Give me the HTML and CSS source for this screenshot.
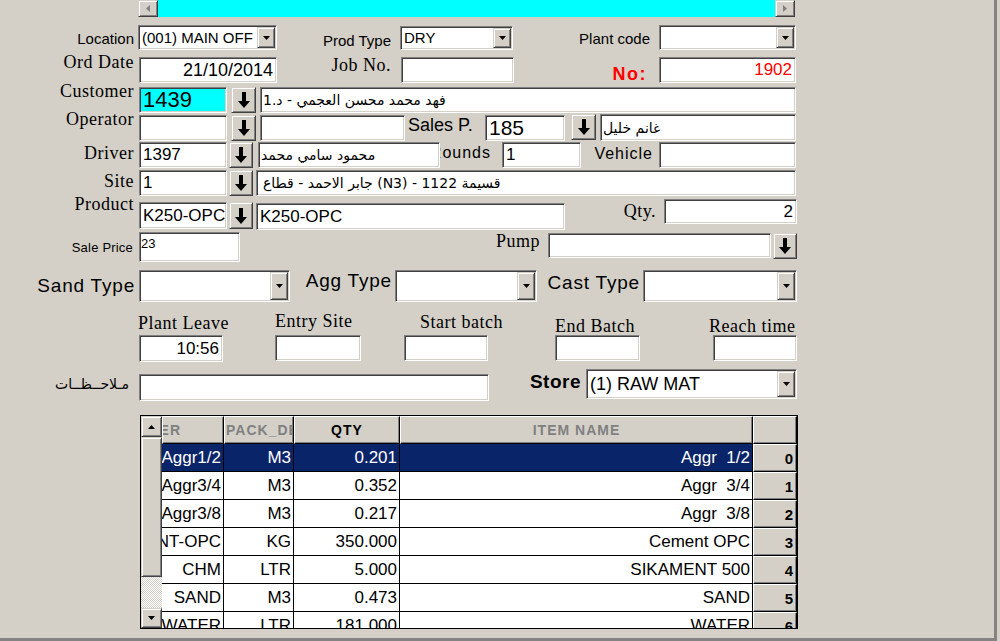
FILE: index.html
```html
<!DOCTYPE html>
<html>
<head>
<meta charset="utf-8">
<title>Delivery</title>
<link rel="stylesheet" href="styles.css">
</head>
<body>
<div class="window">
  <div class="hscroll">
    <div class="btn sbtn"><svg width="4" height="7" viewBox="0 0 4 7"><path d="M4 0v7L0 3.5z" fill="#808080"/></svg></div>
    <div class="track"></div>
    <div class="btn sbtn"><svg width="4" height="7" viewBox="0 0 4 7"><path d="M0 0v7l4-3.5z" fill="#808080"/></svg></div>
  </div>

  <div class="row r1">
    <div class="lbl s15 l-loc">Location</div>
    <div class="sunk combo c-loc"><span class="val v15">(001) MAIN OFF</span><span class="btn dd"><svg width="7" height="4" viewBox="0 0 7 4"><path d="M0 0h7L3.5 4z"/></svg></span></div>
    <div class="lbl s15 l-prod">Prod Type</div>
    <div class="sunk combo c-prod"><span class="val v15">DRY</span><span class="btn dd"><svg width="7" height="4" viewBox="0 0 7 4"><path d="M0 0h7L3.5 4z"/></svg></span></div>
    <div class="lbl s15 l-plant">Plant code</div>
    <div class="sunk combo c-plant"><span class="val"></span><span class="btn dd"><svg width="7" height="4" viewBox="0 0 7 4"><path d="M0 0h7L3.5 4z"/></svg></span></div>
  </div>

  <div class="row r2">
    <div class="lbl serif l-ord">Ord Date</div>
    <div class="sunk inp i-ord"><span class="val v18 right">21/10/2014</span></div>
    <div class="lbl serif l-job">Job No.</div>
    <div class="sunk inp i-job"></div>
    <div class="lbl l-no">No:</div>
    <div class="sunk inp i-no"><span class="val v17 right red">1902</span></div>
  </div>

  <div class="row r3">
    <div class="lbl serif l-cust">Customer</div>
    <div class="sunk inp i-cust"><span class="val v22">1439</span></div>
    <div class="btn arrow b-cust"><svg width="12" height="16" viewBox="0 0 12 16"><path d="M4 0h4v9h4l-6 7-6-7h4z"/></svg></div>
    <div class="sunk inp i-custn"><span class="val ar">فهد محمد محسن العجمي - د.1</span></div>
  </div>

  <div class="row r4">
    <div class="lbl serif l-op">Operator</div>
    <div class="sunk inp i-op"></div>
    <div class="btn arrow b-op"><svg width="12" height="16" viewBox="0 0 12 16"><path d="M4 0h4v9h4l-6 7-6-7h4z"/></svg></div>
    <div class="sunk inp i-opn"></div>
    <div class="lbl l-sales">Sales P.</div>
    <div class="sunk inp i-sales"><span class="val v21">185</span></div>
    <div class="btn arrow b-sales"><svg width="12" height="16" viewBox="0 0 12 16"><path d="M4 0h4v9h4l-6 7-6-7h4z"/></svg></div>
    <div class="sunk inp i-salesn"><span class="val ar">غانم خليل</span></div>
  </div>

  <div class="row r5">
    <div class="lbl serif l-drv">Driver</div>
    <div class="sunk inp i-drv"><span class="val v17">1397</span></div>
    <div class="btn arrow b-drv"><svg width="12" height="16" viewBox="0 0 12 16"><path d="M4 0h4v9h4l-6 7-6-7h4z"/></svg></div>
    <div class="sunk inp i-drvn"><span class="val ar">محمود سامي محمد</span></div>
    <div class="lbl s16 l-rounds"><span>Rounds</span></div>
    <div class="sunk inp i-rounds"><span class="val v17">1</span></div>
    <div class="lbl s16 l-veh">Vehicle</div>
    <div class="sunk inp i-veh"></div>
  </div>

  <div class="row r6">
    <div class="lbl serif l-site">Site</div>
    <div class="sunk inp i-site"><span class="val v17">1</span></div>
    <div class="btn arrow b-site"><svg width="12" height="16" viewBox="0 0 12 16"><path d="M4 0h4v9h4l-6 7-6-7h4z"/></svg></div>
    <div class="sunk inp i-siten"><span class="val ar site">قسيمة 1122 - (N3) جابر الاحمد - قطاع</span></div>
  </div>

  <div class="row r7">
    <div class="lbl serif l-prodct">Product</div>
    <div class="sunk inp i-prodct"><span class="val v17">K250-OPC</span></div>
    <div class="btn arrow b-prodct"><svg width="12" height="16" viewBox="0 0 12 16"><path d="M4 0h4v9h4l-6 7-6-7h4z"/></svg></div>
    <div class="sunk inp i-prodn"><span class="val v17">K250-OPC</span></div>
    <div class="lbl serif l-qty">Qty.</div>
    <div class="sunk inp i-qty"><span class="val v17 right">2</span></div>
  </div>

  <div class="row r8">
    <div class="lbl l-price">Sale Price</div>
    <div class="sunk inp i-price"><span class="val v13">23</span></div>
    <div class="lbl serif l-pump">Pump</div>
    <div class="sunk inp i-pump"></div>
    <div class="btn arrow b-pump"><svg width="12" height="16" viewBox="0 0 12 16"><path d="M4 0h4v9h4l-6 7-6-7h4z"/></svg></div>
  </div>

  <div class="row r9">
    <div class="lbl s19 l-sand">Sand Type</div>
    <div class="sunk combo c-sand"><span class="val"></span><span class="btn dd"><svg width="7" height="4" viewBox="0 0 7 4"><path d="M0 0h7L3.5 4z"/></svg></span></div>
    <div class="lbl s19 l-agg">Agg Type</div>
    <div class="sunk combo c-agg"><span class="val"></span><span class="btn dd"><svg width="7" height="4" viewBox="0 0 7 4"><path d="M0 0h7L3.5 4z"/></svg></span></div>
    <div class="lbl s19 l-cast">Cast Type</div>
    <div class="sunk combo c-cast"><span class="val"></span><span class="btn dd"><svg width="7" height="4" viewBox="0 0 7 4"><path d="M0 0h7L3.5 4z"/></svg></span></div>
  </div>

  <div class="row r10a">
    <div class="lbl serif start l-pl">Plant Leave</div>
    <div class="lbl serif start l-es">Entry Site</div>
    <div class="lbl serif start l-sb">Start batch</div>
    <div class="lbl serif start l-eb">End Batch</div>
    <div class="lbl serif start l-rt">Reach time</div>
  </div>

  <div class="row r10b">
    <div class="sunk inp i-pl"><span class="val v17 right">10:56</span></div>
    <div class="sunk inp i-es"></div>
    <div class="sunk inp i-sb"></div>
    <div class="sunk inp i-eb"></div>
    <div class="sunk inp i-rt"></div>
  </div>

  <div class="row r11">
    <div class="lbl l-notes">مـلاحــظــات</div>
    <div class="sunk inp i-notes"></div>
    <div class="lbl l-store">Store</div>
    <div class="sunk combo c-store"><span class="val v18">(1) RAW MAT</span><span class="btn dd"><svg width="7" height="4" viewBox="0 0 7 4"><path d="M0 0h7L3.5 4z"/></svg></span></div>
  </div>

  <div class="grid">
    <div class="vscroll">
      <div class="btn vs-up"><svg width="7" height="4" viewBox="0 0 7 4"><path d="M3.5 0L7 4H0z"/></svg></div>
      <div class="btn vs-thumb"></div>
      <div class="vs-track"></div>
      <div class="btn vs-down"><svg width="7" height="4" viewBox="0 0 7 4"><path d="M0 0h7L3.5 4z"/></svg></div>
    </div>
    <div class="tbl">
      <div class="trow thead">
        <div class="th c1 dim"><span class="h-c1">NUMBER</span></div>
        <div class="th c2 dim lefty">PACK_DESC</div>
        <div class="th c3">QTY</div>
        <div class="th c4 dim">ITEM NAME</div>
        <div class="th rh"></div>
      </div>
      <div class="trow sel">
        <div class="td c1"><span>Aggr1/2</span></div>
        <div class="td c2">M3</div>
        <div class="td c3">0.201</div>
        <div class="td c4">Aggr  1/2</div>
        <div class="btn rh">0</div>
      </div>
      <div class="trow">
        <div class="td c1"><span>Aggr3/4</span></div>
        <div class="td c2">M3</div>
        <div class="td c3">0.352</div>
        <div class="td c4">Aggr  3/4</div>
        <div class="btn rh">1</div>
      </div>
      <div class="trow">
        <div class="td c1"><span>Aggr3/8</span></div>
        <div class="td c2">M3</div>
        <div class="td c3">0.217</div>
        <div class="td c4">Aggr  3/8</div>
        <div class="btn rh">2</div>
      </div>
      <div class="trow">
        <div class="td c1"><span>CEMENT-OPC</span></div>
        <div class="td c2">KG</div>
        <div class="td c3">350.000</div>
        <div class="td c4">Cement OPC</div>
        <div class="btn rh">3</div>
      </div>
      <div class="trow">
        <div class="td c1"><span>CHM</span></div>
        <div class="td c2">LTR</div>
        <div class="td c3">5.000</div>
        <div class="td c4">SIKAMENT 500</div>
        <div class="btn rh">4</div>
      </div>
      <div class="trow">
        <div class="td c1"><span>SAND</span></div>
        <div class="td c2">M3</div>
        <div class="td c3">0.473</div>
        <div class="td c4">SAND</div>
        <div class="btn rh">5</div>
      </div>
      <div class="trow">
        <div class="td c1"><span>WATER</span></div>
        <div class="td c2">LTR</div>
        <div class="td c3">181.000</div>
        <div class="td c4">WATER</div>
        <div class="btn rh">6</div>
      </div>
    </div>
  </div>
</div>
</body>
</html>
```

FILE: styles.css
```css
* { box-sizing: border-box; }
html, body { margin: 0; padding: 0; }
body {
  width: 1000px; height: 641px; overflow: hidden;
  background: #d4d0c8; color: #000;
  font-family: "Liberation Sans", "DejaVu Sans", Arial, sans-serif;
}
.window {
  width: 997px; height: 641px;
  border-right: 3px solid #858381; border-bottom: 3px solid #858381;
}
svg { display: block; }

/* 3D primitives */
.btn {
  background: #d4d0c8;
  border: 1px solid; border-color: #d4d0c8 #404040 #404040 #d4d0c8;
  box-shadow: inset 1px 1px 0 #fff, inset -1px -1px 0 #808080;
  display: flex; align-items: center; justify-content: center;
  flex: none;
}
.sunk {
  background: #fff;
  border: 1px solid; border-color: #808080 #fff #fff #808080;
  box-shadow: inset 1px 1px 0 #404040, inset -1px -1px 0 #d4d0c8;
  flex: none;
}
.inp, .combo { display: flex; align-items: center; overflow: hidden; }
.val { flex: 1; min-width: 0; padding: 0 2px 0 3px; white-space: pre; overflow: hidden; font-size: 17px; line-height: 20px; }
.v13 { font-size: 13px; }
.v15 { font-size: 15px; }
.v17 { font-size: 17px; }
.v18 { font-size: 18px; line-height: 21px; }
.v21 { font-size: 21px; line-height: 24px; }
.v22 { font-size: 22px; line-height: 24px; }
.right { text-align: right; padding-right: 3px; }
.red { color: #ff0000; }
.ar { direction: rtl; text-align: left; font-family: "DejaVu Sans", sans-serif; font-size: 14px; padding-left: 2px; }
.ar.site { padding-left: 6px; }
.dd { width: 18px; margin: 1px 1px 1px 0; height: calc(100% - 2px); }
.arrow svg path { fill: #000; }

/* top scrollbar */
.hscroll { margin-left: 138px; width: 657px; height: 17px; display: flex; }
.sbtn { width: 20px; height: 17px; }
.track { flex: 1; background: #00ffff; }

/* rows */
.row { display: flex; align-items: flex-start; flex: none; }
.lbl { display: flex; align-items: center; justify-content: flex-end; white-space: nowrap; flex: none; }
.lbl.start { justify-content: flex-start; }
.serif { font-family: "Liberation Serif", "Times New Roman", serif; font-size: 18px; letter-spacing: .5px; line-height: 20px; height: 20px; }
.s15 { font-size: 15px; }
.s16 { font-size: 16px; letter-spacing: 1px; line-height: 20px; height: 20px; }
.s19 { font-size: 19px; letter-spacing: .8px; line-height: 22px; height: 22px; }

.r1 { margin-top: 8px; height: 26px; }
.l-loc { width: 134px; height: 26px; }
.c-loc { margin-left: 4px; width: 139px; height: 25px; }
.l-prod { width: 114px; height: 26px; margin-top: 2px; }
.c-prod { margin-left: 9px; width: 113px; height: 24px; margin-top: 1px; }
.l-plant { width: 137px; height: 26px; }
.c-plant { margin-left: 9px; width: 137px; height: 25px; }

.r2 { margin-top: 6px; height: 26px; }
.l-ord { width: 134px; margin-top: -5px; }
.i-ord { margin-left: 5px; width: 138px; height: 26px; }
.l-job { width: 114px; margin-top: -2px; }
.i-job { margin-left: 10px; width: 113px; height: 26px; }
.l-no { width: 133px; margin-top: 7px; height: 20px; line-height: 20px; font-size: 18px; font-weight: bold; color: #ff0000; letter-spacing: 1.5px; }
.i-no { margin-left: 12px; width: 137px; height: 26px; }

.r3 { margin-top: 4px; height: 26px; }
.l-cust { width: 134px; margin-top: -6px; }
.i-cust { margin-left: 5px; width: 88px; height: 26px; background: #00ffff; }
.b-cust { margin-left: 4px; width: 25px; height: 26px; }
.i-custn { margin-left: 4px; width: 536px; height: 26px; }

.r4 { margin-top: 2px; height: 26px; }
.l-op { width: 134px; margin-top: -6px; }
.i-op { margin-left: 5px; width: 88px; height: 26px; }
.b-op { margin-left: 4px; width: 25px; height: 26px; }
.i-opn { margin-left: 4px; width: 145px; height: 26px; }
.l-sales { margin-left: 3px; width: 72px; height: 20px; line-height: 20px; font-size: 18px; justify-content: flex-start; }
.i-sales { margin-left: 5px; width: 80px; height: 26px; }
.b-sales { margin-left: 6px; width: 25px; height: 26px; margin-top: -1px; }
.i-salesn { margin-left: 4px; width: 196px; height: 27px; margin-top: -1px; }

.r5 { margin-top: 1px; height: 26px; }
.l-drv { width: 134px; margin-top: 1px; }
.i-drv { margin-left: 5px; width: 88px; height: 26px; }
.b-drv { margin-left: 2px; width: 24px; height: 26px; }
.i-drvn { margin-left: 5px; width: 182px; height: 26px; }
.l-rounds { width: 58px; margin-top: 1px; overflow: hidden; padding-right: 7px; }
.l-rounds span { flex: none; }
.i-rounds { margin-left: 4px; width: 79px; height: 26px; }
.l-veh { width: 72px; margin-top: 2px; }
.i-veh { margin-left: 6px; width: 137px; height: 26px; }

.r6 { margin-top: 2px; height: 26px; }
.l-site { width: 134px; margin-top: 1px; }
.i-site { margin-left: 5px; width: 88px; height: 26px; }
.b-site { margin-left: 2px; width: 24px; height: 26px; }
.i-siten { margin-left: 3px; width: 540px; height: 26px; }

.r7 { margin-top: 3px; height: 31px; }
.l-prodct { width: 134px; margin-top: -5px; }
.i-prodct { margin-left: 5px; width: 88px; height: 27px; margin-top: 3px; }
.b-prodct { margin-left: 2px; width: 24px; height: 27px; margin-top: 3px; }
.i-prodn { margin-left: 3px; width: 309px; height: 27px; margin-top: 4px; }
.l-qty { width: 91px; margin-top: 2px; }
.i-qty { margin-left: 8px; width: 133px; height: 25px; }

.r8 { margin-top: 2px; height: 30px; }
.l-price { width: 133px; margin-top: 8px; font-size: 13px; line-height: 16px; height: 16px; letter-spacing: .2px; }
.i-price { margin-left: 6px; width: 101px; height: 30px; align-items: flex-start; padding-top: 3px; }
.i-price .val { padding-left: 1px; line-height: 16px; }
.l-pump { width: 300px; margin-top: -1px; }
.i-pump { margin-left: 8px; width: 223px; height: 25px; margin-top: 1px; }
.b-pump { margin-left: 2px; width: 24px; height: 26px; margin-top: 1px; }

.r9 { margin-top: 8px; height: 32px; }
.l-sand { width: 135px; margin-top: 5px; }
.c-sand { margin-left: 4px; width: 151px; height: 32px; }
.l-agg { width: 102px; margin-top: 0; }
.c-agg { margin-left: 3px; width: 142px; height: 32px; }
.l-cast { width: 103px; margin-top: 2px; }
.c-cast { margin-left: 3px; width: 154px; height: 32px; }

.r10a { margin-top: 9px; height: 22px; }
.l-pl { margin-left: 138px; width: 137px; margin-top: 2px; }
.l-es { width: 145px; }
.l-sb { width: 135px; margin-top: 1px; }
.l-eb { width: 154px; margin-top: 5px; }
.l-rt { width: 91px; margin-top: 5px; }

.r10b { margin-top: 2px; height: 27px; }
.i-pl { margin-left: 139px; width: 84px; height: 27px; }
.i-es { margin-left: 52px; width: 86px; height: 26px; }
.i-sb { margin-left: 43px; width: 84px; height: 26px; }
.i-eb { margin-left: 67px; width: 85px; height: 26px; }
.i-rt { margin-left: 73px; width: 84px; height: 26px; }

.r11 { margin-top: 7px; height: 33px; }
.l-notes { width: 133px; margin-top: 3px; height: 24px; font-family: "DejaVu Sans", sans-serif; font-size: 14px; padding-right: 4px; }
.i-notes { margin-left: 6px; width: 350px; height: 27px; margin-top: 5px; }
.l-store { width: 92px; margin-top: 2px; height: 22px; line-height: 22px; font-size: 19px; font-weight: bold; letter-spacing: .5px; }
.c-store { margin-left: 5px; width: 211px; height: 30px; }

/* grid */
.grid {
  margin-top: 13px; margin-left: 140px; width: 658px; height: 214px;
  border: 1px solid #000; display: flex; overflow: hidden; flex: none;
  background: #d4d0c8;
}
.vscroll { width: 21px; flex: none; display: flex; flex-direction: column; }
.vs-up { height: 21px; }
.vs-thumb { height: 140px; }
.vs-track { height: 31px; flex: none; background: repeating-conic-gradient(#fff 0 25%, #d4d0c8 0 50%) 0 0 / 2px 2px; }
.vs-down { height: 20px; }
.tbl { width: 635px; flex: none; overflow: hidden; }
.trow { display: flex; height: 28px; }
.c1 { width: 62px; }
.c2 { width: 70px; }
.c3 { width: 106px; }
.c4 { width: 353px; }
.rh { width: 44px; }
.th {
  height: 28px; flex: none; display: flex; align-items: center; justify-content: center;
  background: #d4d0c8; overflow: hidden; white-space: nowrap;
  border: 1px solid; border-color: #fff #000 #000 #fff;
  box-shadow: inset -1px -1px 0 #808080;
  font-size: 14px; font-weight: bold; letter-spacing: 1px;
}
.th.dim { color: #808080; }
.th.lefty { justify-content: flex-start; padding-left: 1px; }
.th.c1 { justify-content: flex-end; }
.h-c1 { flex: none; margin-right: 42px; }
.td {
  flex: none; height: 28px; background: #fff;
  border-right: 1px solid #000; border-bottom: 1px solid #000;
  display: flex; align-items: center; justify-content: flex-end;
  padding-right: 2px; overflow: hidden; white-space: pre;
  font-size: 17px;
}
.td span { flex: none; }
.sel .td { background: #0a246a; color: #fff; }
.trow .btn.rh {
  height: 28px; justify-content: flex-end; padding-right: 3px;
  font-size: 15px; font-weight: bold;
  border-color: #fff #000 #000 #fff;
  box-shadow: inset -1px -1px 0 #808080;
}
```
